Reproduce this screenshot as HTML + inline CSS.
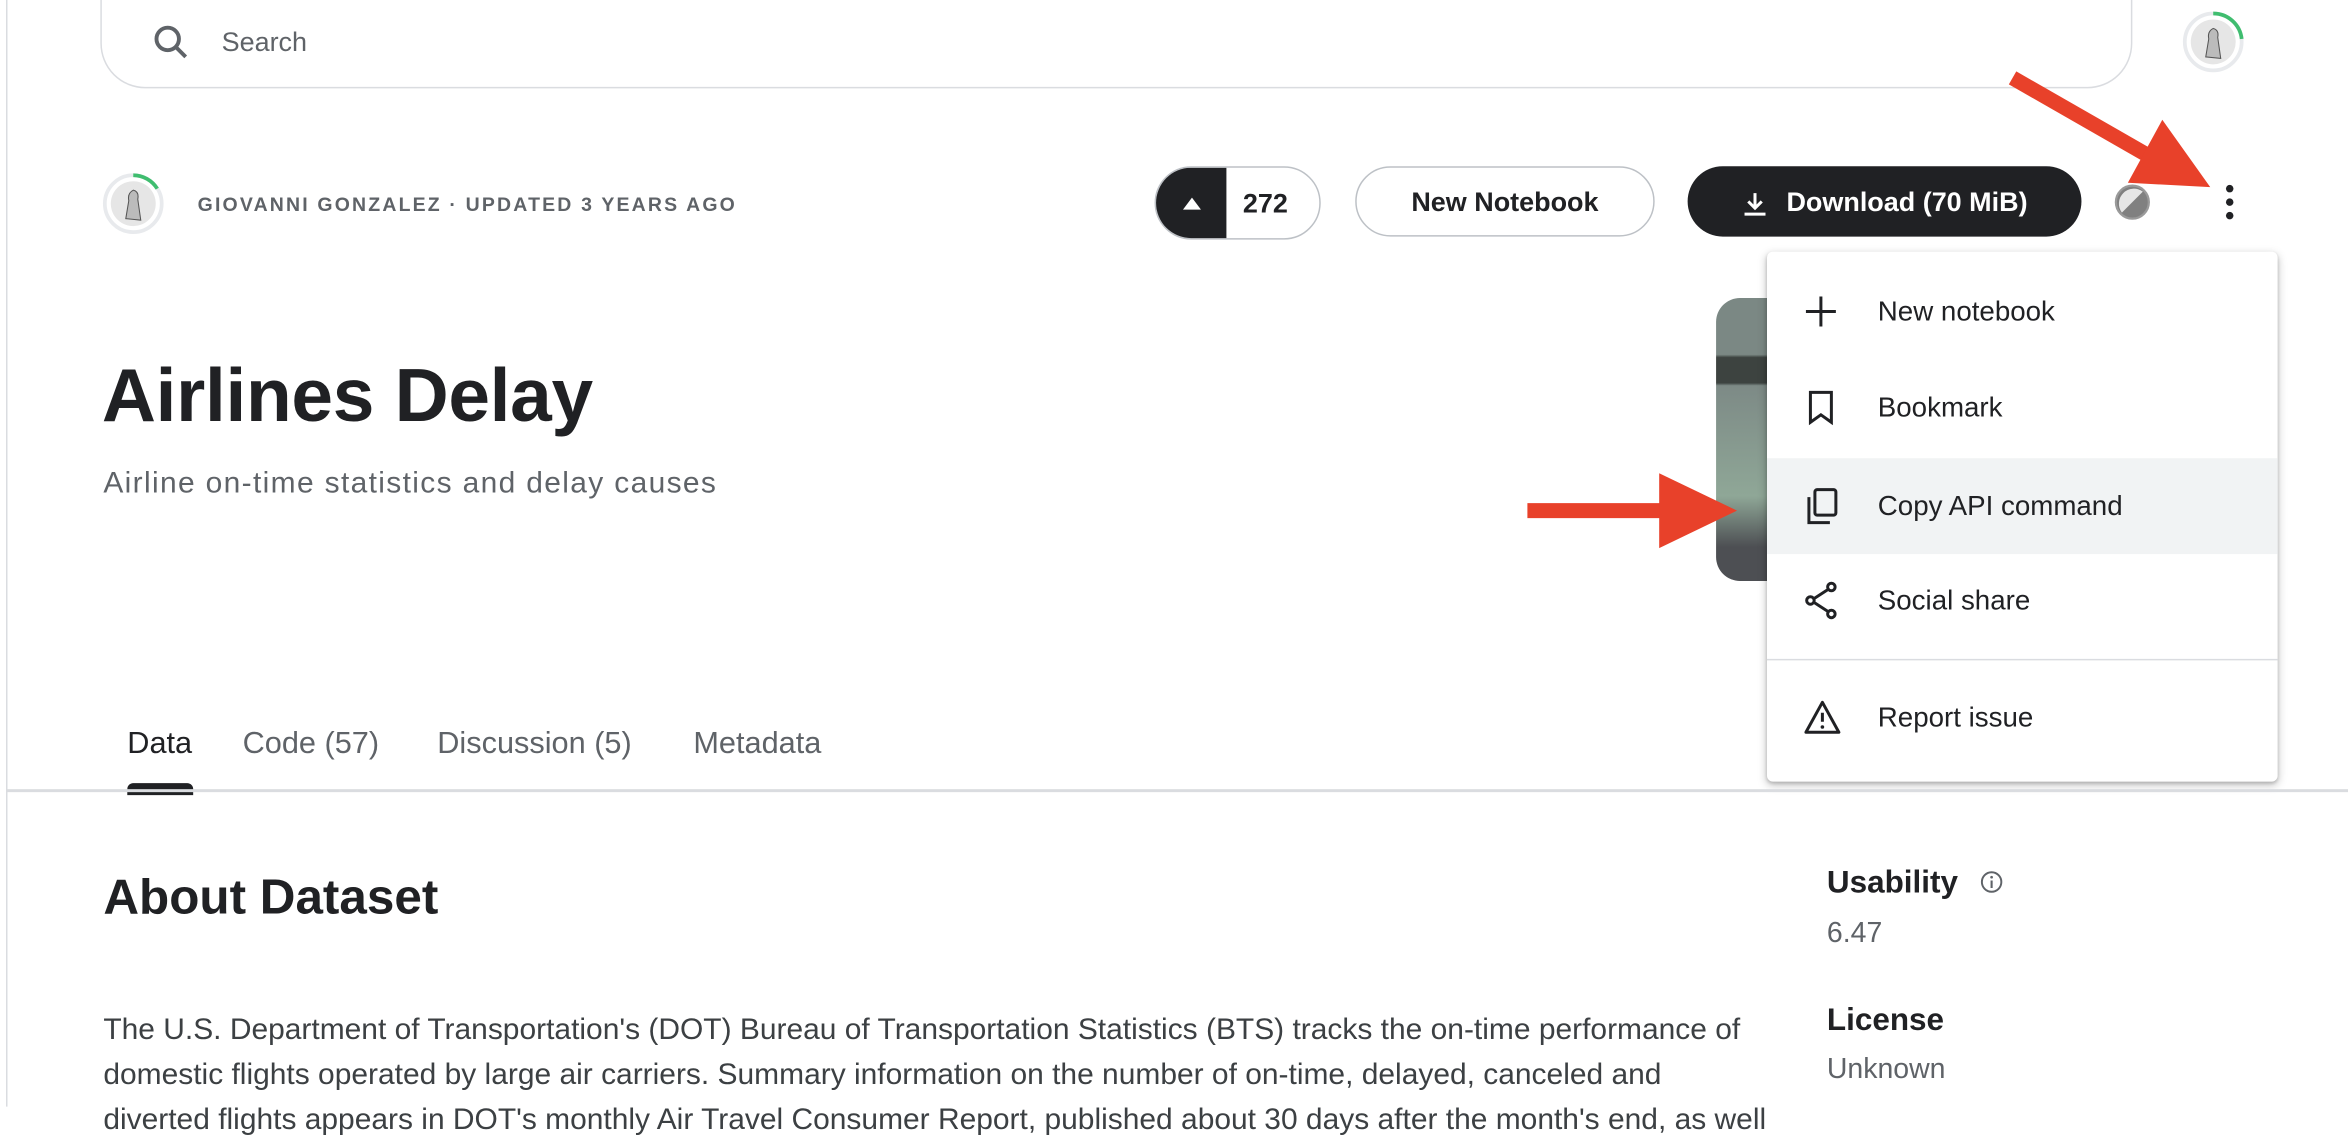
<!DOCTYPE html>
<html><head><meta charset="utf-8"><style>
html,body{margin:0;padding:0;width:2348px;height:1106px;overflow:hidden;background:#fff}
#w{position:absolute;left:0;top:0;width:1568px;height:739px;transform:scale(1.49745);transform-origin:0 0;font-family:"Liberation Sans",sans-serif;color:#202124}
.a{position:absolute;white-space:nowrap}
.btn{position:absolute;box-sizing:border-box;border-radius:24px;font-weight:bold;font-size:18px;display:flex;align-items:center;justify-content:center}
.mi{position:absolute;left:0;width:341px;height:64px;display:flex;align-items:center;font-size:18.5px;color:#202124}
.mi svg{position:absolute;left:24px}
.mi span{position:absolute;left:74px}
</style></head><body><div id="w">
<div class="a" style="left:4px;top:0;width:1px;height:739px;background:#dadce0"></div>
<div class="a" style="left:67px;top:-30px;width:1357px;height:89px;border:1px solid #dadce0;border-radius:30px;box-sizing:border-box"></div>
<svg class="a" style="left:101px;top:15px" width="26" height="26" viewBox="0 0 26 26"><circle cx="11" cy="11" r="7.5" fill="none" stroke="#5f6368" stroke-width="2.6"/><path d="M16.5 16.5L23 23" stroke="#5f6368" stroke-width="2.6"/></svg>
<div class="a" style="left:148px;top:18px;font-size:18px;color:#5f6368">Search</div>
<svg class="a" style="left:1456px;top:6px" width="44" height="44" viewBox="0 0 44 44"><circle cx="22" cy="22" r="19" fill="none" stroke="#e8eaed" stroke-width="2.5"/><path d="M22 3A19 19 0 0 1 41 20" fill="none" stroke="#3fbd6f" stroke-width="2.5"/><circle cx="22" cy="22" r="15" fill="#e6e6e6"/><path d="M17 32L19 20Q18 15 22 13Q26 14 25 19L27 33Z" fill="#bbb" stroke="#555" stroke-width=".7"/></svg>
<svg class="a" style="left:67px;top:114px" width="44" height="44" viewBox="0 0 44 44"><circle cx="22" cy="22" r="19" fill="none" stroke="#e8eaed" stroke-width="2.5"/><path d="M22 3A19 19 0 0 1 38 12" fill="none" stroke="#3fbd6f" stroke-width="2.5"/><circle cx="22" cy="22" r="15" fill="#e6e6e6"/><path d="M17 32L19 20Q18 15 22 13Q26 14 25 19L27 33Z" fill="#bbb" stroke="#555" stroke-width=".7"/></svg>
<div class="a" style="left:132px;top:129px;font-size:13px;font-weight:bold;letter-spacing:1.45px;color:#5f6368">GIOVANNI GONZALEZ · UPDATED 3 YEARS AGO</div>
<div class="a" style="left:771px;top:111px;width:111px;height:49px;border:1px solid #bdc1c6;border-radius:25px;box-sizing:border-box;overflow:hidden"><div style="position:absolute;left:0;top:0;width:47px;height:49px;background:#202124"></div><svg style="position:absolute;left:18px;top:19px" width="12" height="10"><path d="M0 9L6 1L12 9Z" fill="#fff"/></svg><div style="position:absolute;left:58px;top:14px;font-size:18px;font-weight:bold">272</div></div>
<div class="btn" style="left:905px;top:111px;width:200px;height:47px;border:1px solid #bdc1c6;padding-top:2px">New Notebook</div>
<div class="btn" style="left:1127px;top:111px;width:263px;height:47px;background:#202124;color:#fff;padding-top:2px"><svg width="18" height="18" viewBox="0 0 18 18" style="margin-right:12px"><path d="M9 2V12M4.5 7.5L9 12L13.5 7.5M2 16H16" stroke="#fff" stroke-width="2" fill="none"/></svg>Download (70 MiB)</div>
<svg class="a" style="left:1411px;top:122px" width="26" height="26"><circle cx="13" cy="13" r="11" fill="#808080" stroke="#9a9a9a" stroke-width="1.5"/><path d="M6 20L20 6A10 10 0 0 0 6 20Z" fill="#e6e6e6"/></svg>
<svg class="a" style="left:1484px;top:122px" width="10" height="26"><circle cx="5" cy="4" r="2.5" fill="#202124"/><circle cx="5" cy="13" r="2.5" fill="#202124"/><circle cx="5" cy="22" r="2.5" fill="#202124"/></svg>
<div class="a" style="left:1146px;top:199px;width:60px;height:189px;border-radius:16px;background:linear-gradient(180deg,#7b8884 0%,#7b8884 20%,#3d4340 21%,#3d4340 30%,#7d8a86 31%,#8fa797 70%,#4d4f53 88%,#4d4f53 100%)"></div>
<div class="a" style="left:1180px;top:168px;width:341px;height:354px;background:#fff;border-radius:4px;box-shadow:0 2px 6px rgba(0,0,0,.25),0 1px 2px rgba(0,0,0,.15)">
<div class="mi" style="top:8px"><svg width="24" height="24" viewBox="0 0 24 24"><path d="M12 2V22M2 12H22" stroke="#202124" stroke-width="2"/></svg><span>New notebook</span></div>
<div class="mi" style="top:72px"><svg width="24" height="24" viewBox="0 0 24 24"><path d="M5 2H19V22L12 17L5 22Z" stroke="#202124" stroke-width="2" fill="none"/></svg><span>Bookmark</span></div>
<div class="mi" style="top:138px;background:#f1f3f4"><svg width="26" height="26" viewBox="0 0 26 26"><rect x="8" y="2" width="14" height="17" rx="1.5" stroke="#202124" stroke-width="2" fill="none"/><path d="M4 7V24H18" stroke="#202124" stroke-width="2" fill="none"/></svg><span>Copy API command</span></div>
<div class="mi" style="top:201px"><svg width="26" height="26" viewBox="0 0 26 26"><circle cx="19" cy="4" r="2.5" stroke="#202124" stroke-width="2" fill="none"/><circle cx="5" cy="13" r="2.5" stroke="#202124" stroke-width="2" fill="none"/><circle cx="19" cy="22" r="2.5" stroke="#202124" stroke-width="2" fill="none"/><path d="M7 12L17 5.5M7 14L17 20.5" stroke="#202124" stroke-width="2"/></svg><span>Social share</span></div>
<div style="position:absolute;left:0;top:272px;width:341px;height:1px;background:#dadce0"></div>
<div class="mi" style="top:279px"><svg width="26" height="26" viewBox="0 0 26 26"><path d="M13 3L24 23H2Z" stroke="#202124" stroke-width="2" fill="none" stroke-linejoin="round"/><path d="M13 10V16" stroke="#202124" stroke-width="2"/><circle cx="13" cy="19.5" r="1.2" fill="#202124"/></svg><span>Report issue</span></div>
</div>
<svg class="a" style="left:0;top:0" width="1568" height="739"><path d="M1344 52L1440 107" stroke="#e8412a" stroke-width="10"/><path d="M1444 80L1476 125L1421 122Z" fill="#e8412a"/><path d="M1020 341H1112" stroke="#e8412a" stroke-width="10"/><path d="M1108 316L1160 341L1108 366Z" fill="#e8412a"/></svg>
<div class="a" style="left:68px;top:235px;font-size:50px;font-weight:bold;letter-spacing:-.2px">Airlines Delay</div>
<div class="a" style="left:69px;top:312px;font-size:20px;letter-spacing:.9px;color:#5f6368">Airline on-time statistics and delay causes</div>
<div class="a" style="left:85px;top:485px;font-size:20.5px">Data</div>
<div class="a" style="left:162px;top:485px;font-size:20.5px;color:#5f6368">Code (57)</div>
<div class="a" style="left:292px;top:485px;font-size:20.5px;color:#5f6368">Discussion (5)</div>
<div class="a" style="left:463px;top:485px;font-size:20.5px;color:#5f6368">Metadata</div>
<div class="a" style="left:85px;top:523px;width:44px;height:8px;border-radius:4px 4px 0 0;background:#202124"></div>
<div class="a" style="left:4px;top:527px;width:1564px;height:2px;background:#dadce0"></div>
<div class="a" style="left:69px;top:580px;font-size:33px;font-weight:bold">About Dataset</div>
<div class="a" style="left:69px;top:673px;font-size:20px;line-height:30px;color:#3c4043">The U.S. Department of Transportation's (DOT) Bureau of Transportation Statistics (BTS) tracks the on-time performance of<br>domestic flights operated by large air carriers. Summary information on the number of on-time, delayed, canceled and<br>diverted flights appears in DOT's monthly Air Travel Consumer Report, published about 30 days after the month's end, as well</div>
<div class="a" style="left:1220px;top:578px;font-size:21px;font-weight:bold">Usability</div>
<svg class="a" style="left:1322px;top:581px" width="16" height="16"><circle cx="8" cy="8" r="6.5" fill="none" stroke="#5f6368" stroke-width="1.3"/><path d="M8 7V12" stroke="#5f6368" stroke-width="1.4"/><circle cx="8" cy="4.8" r=".9" fill="#5f6368"/></svg>
<div class="a" style="left:1220px;top:613px;font-size:19px;color:#5f6368">6.47</div>
<div class="a" style="left:1220px;top:670px;font-size:21px;font-weight:bold">License</div>
<div class="a" style="left:1220px;top:704px;font-size:19px;color:#5f6368">Unknown</div>
</div></body></html>
